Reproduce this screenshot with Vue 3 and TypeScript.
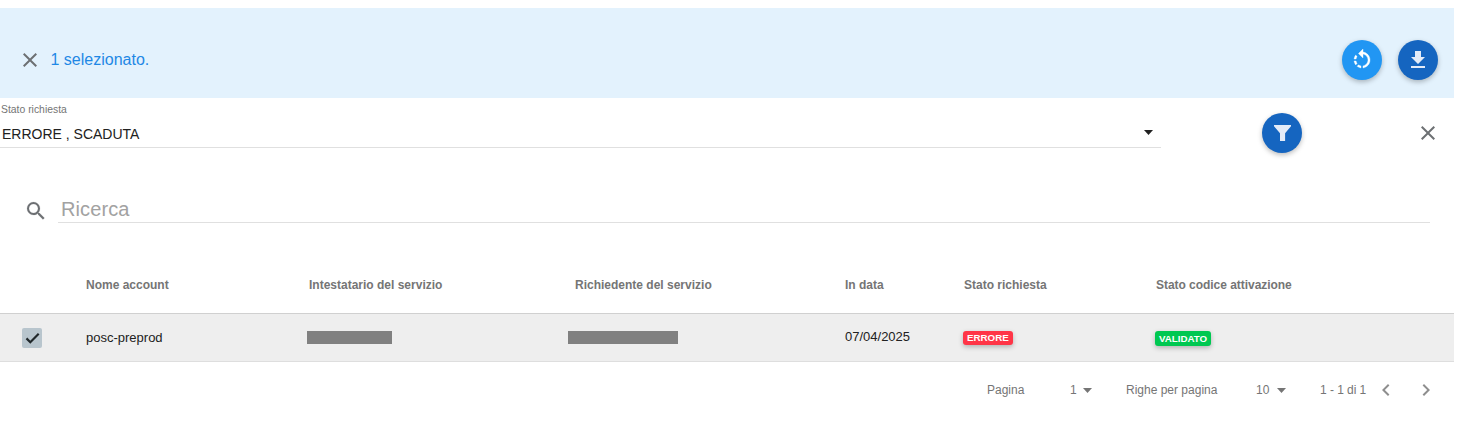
<script setup lang="ts">
interface Column { id: string; label: string }

const columns: Column[] = [
  { id: 'account', label: 'Nome account' },
  { id: 'owner', label: 'Intestatario del servizio' },
  { id: 'applicant', label: 'Richiedente del servizio' },
  { id: 'date', label: 'In data' },
  { id: 'status', label: 'Stato richiesta' },
  { id: 'code', label: 'Stato codice attivazione' },
]
const closePath = 'M19 6.41 17.59 5 12 10.59 6.41 5 5 6.41 10.59 12 5 17.59 6.41 19 12 13.41 17.59 19 19 17.59 13.41 12z'
</script>

<template>
  <main class="panel">
    <header class="selection">
      <svg class="icon close" viewBox="0 0 24 24"><path :d="closePath" /></svg>
      <span class="selected">1 selezionato.</span>
      <button class="fab light" aria-label="Rigenera">
        <svg viewBox="0 0 24 24"><path d="M7.11 8.53 5.7 7.11C4.8 8.27 4.24 9.61 4.07 11h2.02c.14-.87.49-1.72 1.02-2.47zM6.09 13H4.07c.17 1.39.72 2.73 1.62 3.89l1.41-1.42c-.52-.75-.87-1.59-1.01-2.47zm1.01 5.32c1.16.9 2.51 1.44 3.9 1.61V17.9c-.87-.15-1.71-.49-2.46-1.03L7.1 18.32zM13 4.07V1L8.45 5.55 13 10V6.09c2.84.48 5 2.94 5 5.91s-2.16 5.43-5 5.91v2.02c3.95-.49 7-3.85 7-7.93s-3.05-7.44-7-7.93z" /></svg>
      </button>
      <button class="fab" aria-label="Scarica">
        <svg viewBox="0 0 24 24"><path d="M19 9h-4V3H9v6H5l7 7 7-7zM5 18v2h14v-2H5z" /></svg>
      </button>
    </header>

    <section class="filters">
      <div class="select">
        <label>Stato richiesta</label>
        <div class="value"><span>ERRORE , SCADUTA</span><svg class="caret" viewBox="0 0 9 5"><path d="M0 0h9L4.5 5z" /></svg></div>
      </div>
      <button class="fab filter" aria-label="Filtra">
        <svg viewBox="0 0 24 24"><path d="M4 4h17v1.3l-5.9 7V20H10v-7.7L4 5.3z" /></svg>
      </button>
      <svg class="icon clear" viewBox="0 0 24 24"><path :d="closePath" /></svg>
    </section>

    <section class="search">
      <svg class="icon" viewBox="0 0 24 24"><path d="M15.5 14h-.79l-.28-.27A6.47 6.47 0 0 0 16 9.5 6.5 6.5 0 1 0 9.5 16c1.61 0 3.09-.59 4.23-1.57l.27.28v.79l5 4.99L20.49 19l-4.99-5zm-6 0C7.01 14 5 11.99 5 9.5S7.01 5 9.5 5 14 7.01 14 9.5 11.99 14 9.5 14z" /></svg>
      <div class="search-field">Ricerca</div>
    </section>

    <section class="table">
      <div class="row head">
        <span />
        <span v-for="column in columns" :key="column.id"><b :class="column.id">{{ column.label }}</b></span>
      </div>
      <div class="row body">
        <span class="check"><svg viewBox="0 0 20 20"><path d="M4.5 10.4 8.3 14.2 16.7 5.8" /></svg></span>
        <span class="account-name">posc-preprod</span>
        <span><i class="mask owner-mask" /></span>
        <span><i class="mask applicant-mask" /></span>
        <span class="day">07/04/2025</span>
        <span><em class="badge error">ERRORE</em></span>
        <span><em class="badge valid">VALIDATO</em></span>
      </div>
    </section>

    <footer class="pager">
      <span class="page-label">Pagina</span>
      <span class="page">1</span><svg class="caret" viewBox="0 0 9 5"><path d="M0 0h9L4.5 5z" /></svg>
      <span class="rows-label">Righe per pagina</span>
      <span class="rows">10</span><svg class="caret" viewBox="0 0 9 5"><path d="M0 0h9L4.5 5z" /></svg>
      <span class="range">1 - 1 di 1</span>
      <svg class="nav previous" viewBox="0 0 24 24"><path d="M15.41 7.41 14 6l-6 6 6 6 1.41-1.41L10.83 12z" /></svg>
      <svg class="nav next" viewBox="0 0 24 24"><path d="M8.59 16.59 13.17 12 8.59 7.41 10 6l6 6-6 6z" /></svg>
    </footer>
  </main>
</template>

<style>
html, body { margin: 0; background: #fff; overflow: hidden; }
</style>

<style scoped>
.panel { box-sizing: border-box; width: 1454px; height: 423px; padding-top: 8px; font-family: "Liberation Sans", Arial, sans-serif; color: #212121; }
svg { display: block; flex: none; fill: currentColor; }
.icon { width: 24px; height: 24px; color: #6d7073; }
.selection { display: flex; align-items: center; box-sizing: border-box; height: 90px; padding: 14px 16px 0 18px; background: #e3f2fd; }
.close { margin-right: 8.5px; }
.selected { margin-right: auto; font-size: 16px; color: #1e88e5; }
.fab { display: grid; place-items: center; flex: none; width: 40px; height: 40px; padding: 0; border: 0; border-radius: 50%; color: #e3ebf8; background: #1565c0; box-shadow: 0 2px 5px rgba(0,0,0,.26); }
.fab svg { width: 24px; height: 24px; }
.fab.light { margin-right: 16px; color: #fff; background: #2196f3; }
.fab.light path { stroke: currentColor; stroke-width: .35; }
.filters { display: flex; height: 88px; }
.select { box-sizing: border-box; width: 1161px; height: 50px; padding: 5px 0 0 1px; border-bottom: 1px solid #e0e0e0; }
.select label { display: block; height: 13px; font-size: 10.4px; line-height: 13px; color: #757575; }
.value { display: flex; align-items: center; justify-content: space-between; height: 28px; margin-top: 4px; padding: 0 8px 0 1px; font-size: 14px; }
.caret { width: 9px; height: 5px; }
.value .caret { margin-top: -3px; }
.filter { margin: 15px 0 0 101px; }
.clear { margin: 23px 0 0 114px; }
.search { display: flex; height: 70px; padding-left: 24px; }
.search .icon { margin-top: 13px; }
.search path { stroke: currentColor; stroke-width: .15; }
.search-field { box-sizing: border-box; width: 1372px; height: 37px; margin-left: 10px; padding: 10px 0 0 3px; border-bottom: 1px solid #e0e0e0; font-size: 20px; line-height: 26px; letter-spacing: .1px; color: #a2a2a2; }
.row { display: grid; grid-template-columns: 86px 221px 261px 277px 118px 192px 1fr; box-sizing: border-box; align-items: center; }
.head { height: 58px; border-bottom: 1px solid #d0d0d0; font-size: 12px; color: #757575; }
.head .owner { margin-left: 2px; }
.head .applicant { margin-left: 7px; }
.head .status, .head .code { margin-left: 1px; }
.head .code { letter-spacing: -.04px; }
.body { height: 48px; border-bottom: 1px solid #dedede; background: #eee; font-size: 13px; color: #212121; }
.check { width: 20px; height: 20px; margin-left: 22px; border-radius: 2px; background: #b8c5cd; }
.check svg { width: 20px; height: 20px; fill: none; stroke: #20272a; stroke-width: 2.2; }
.mask { display: block; height: 13px; background: #808080; }
.owner-mask { width: 85px; }
.applicant-mask { width: 110px; }
.day { margin-top: -2px; }
.badge { display: block; box-sizing: border-box; height: 14px; border-radius: 3px; padding: 0 4px; font-size: 9.75px; line-height: 14px; font-weight: 700; font-style: normal; color: #fff; box-shadow: 0 2px 5px rgba(0,0,0,.25); white-space: nowrap; }
.error { width: 50px; background: #ff3547; }
.valid { width: 56px; height: 15px; margin-top: 2px; line-height: 15px; background: #00c851; }
.pager { display: flex; align-items: center; height: 56px; font-size: 12px; color: #757575; }
.page-label { width: 83px; margin-left: 987px; }
.page { width: 13px; }
.rows-label { width: 130px; margin-left: 34px; }
.rows { width: 21px; }
.range { width: 54px; margin-left: 34px; letter-spacing: -.05px; white-space: nowrap; }
.nav { width: 24px; height: 24px; color: #8e8e8e; }
.next { margin-left: 16px; }
</style>
